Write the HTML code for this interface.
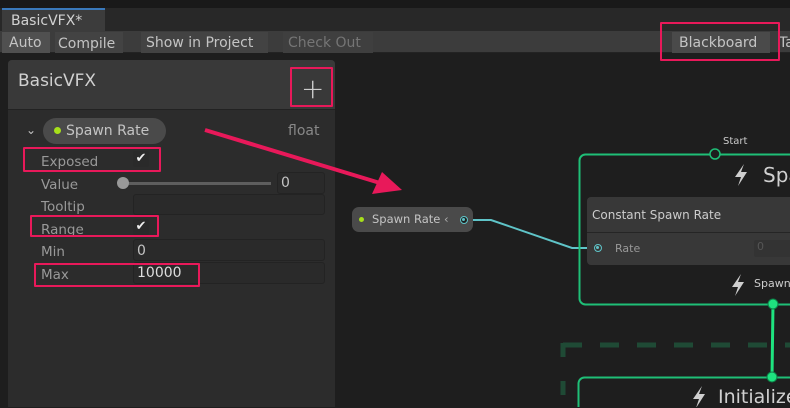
<!DOCTYPE html><html><head><style>
*{margin:0;padding:0;box-sizing:border-box}
body{width:790px;height:407px;overflow:hidden;background:#1e1e1e;font-family:"DejaVu Sans","Liberation Sans",sans-serif;position:relative;color:#c4c4c4}
.a{position:absolute}
.t{font-size:14px;white-space:nowrap}
.f{position:absolute;background:#2a2a2a;border:1px solid #232323;border-radius:3px}
.rb{position:absolute;border:2px solid #e8195a;border-radius:1px}
.cb{position:absolute;width:16px;height:16px;background:#2a2a2a;border-radius:2px;color:#eee;font-size:13px;text-align:center;line-height:16px}
.l{color:#999;font-size:13.5px}
</style></head><body>
<div class="a" style="left:0;top:0;width:790px;height:8px;background:#191919"></div>
<div class="a" style="left:0;top:8px;width:790px;height:23px;background:#282828"></div>
<div class="a" style="left:2px;top:8px;width:103px;height:23px;background:#3c3c3c;border-top:2px solid #3a79bb"></div>
<div class="a t" style="left:11px;top:13px;color:#d2d2d2">BasicVFX*</div>
<div class="a" style="left:0;top:31px;width:790px;height:22px;background:#3c3c3c;border-bottom:1px solid #232323"></div>
<div class="a" style="left:2px;top:32px;width:48px;height:21px;background:#505050"></div>
<div class="a t" style="left:9px;top:35px">Auto</div>
<div class="a" style="left:55px;top:32px;width:68px;height:21px;background:#434343"></div>
<div class="a t" style="left:58px;top:36px">Compile</div>
<div class="a" style="left:141px;top:32px;width:127px;height:21px;background:#434343"></div>
<div class="a t" style="left:146px;top:35px">Show in Project</div>
<div class="a" style="left:283px;top:32px;width:90px;height:21px;background:#3f3f3f"></div>
<div class="a t" style="left:288px;top:35px;color:#757575">Check Out</div>
<div class="a" style="left:672px;top:32px;width:98px;height:21px;background:#4a4a4a"></div>
<div class="a t" style="left:679px;top:35px">Blackboard</div>
<div class="a t" style="left:779px;top:35px">Ta</div>
<div class="rb" style="left:660px;top:22px;width:120px;height:39px"></div>
<div class="a" style="left:8px;top:60px;width:327px;height:347px;background:#2c2c2c;border-radius:4px 4px 0 0"></div>
<div class="a" style="left:8px;top:60px;width:327px;height:50px;background:#393939;border-radius:4px 4px 0 0;border-bottom:1px solid #222"></div>
<div class="a" style="left:18px;top:71px;font-size:17px;color:#d0d0d0">BasicVFX</div>
<div class="a" style="left:301px;top:72px;font-size:28px;color:#ccc;font-weight:300">+</div>
<div class="rb" style="left:290px;top:67px;width:43px;height:40px"></div>
<div class="a t" style="left:26px;top:123px;font-size:12px">⌄</div>
<div class="a" style="left:43px;top:118px;width:123px;height:26px;background:#4a4a4a;border-radius:13px"></div>
<div class="a" style="left:54px;top:127px;width:7px;height:7px;border-radius:50%;background:#a7e01a"></div>
<div class="a t" style="left:66px;top:123px">Spawn Rate</div>
<div class="a t" style="left:288px;top:123px;color:#888">float</div>
<div class="a t l" style="left:41px;top:154px">Exposed</div>
<div class="cb" style="left:133px;top:151px">✔</div>
<div class="rb" style="left:23px;top:147px;width:138px;height:25px"></div>
<div class="a t l" style="left:41px;top:177px">Value</div>
<div class="a" style="left:123px;top:182px;width:148px;height:3px;background:#5e5e5e"></div>
<div class="a" style="left:117px;top:177px;width:12px;height:12px;border-radius:50%;background:#999"></div>
<div class="f" style="left:277px;top:172px;width:48px;height:22px"></div>
<div class="a t" style="left:281px;top:175px">0</div>
<div class="a t l" style="left:41px;top:199px">Tooltip</div>
<div class="f" style="left:133px;top:194px;width:192px;height:21px"></div>
<div class="a t l" style="left:41px;top:222px">Range</div>
<div class="cb" style="left:133px;top:219px">✔</div>
<div class="rb" style="left:30px;top:215px;width:129px;height:22px"></div>
<div class="a t l" style="left:41px;top:244px">Min</div>
<div class="f" style="left:133px;top:239px;width:192px;height:22px"></div>
<div class="a t" style="left:137px;top:243px">0</div>
<div class="a t l" style="left:41px;top:267px">Max</div>
<div class="f" style="left:133px;top:262px;width:192px;height:22px"></div>
<div class="a t" style="left:137px;top:265px;color:#ddd">10000</div>
<div class="rb" style="left:34px;top:263px;width:166px;height:24px"></div>
<svg class="a" style="left:0;top:0" width="790" height="407">
<line x1="205" y1="130" x2="380" y2="183" stroke="#e8195a" stroke-width="4"/>
<polygon points="402,190 372,194 382,172" fill="#e8195a"/>
<polyline points="472,220 491,220 572,248 588,248" fill="none" stroke="#5fc4c8" stroke-width="2"/>
<rect x="579.5" y="154.5" width="220" height="150" rx="6" fill="none" stroke="#1fbf77" stroke-width="2"/>
<circle cx="715" cy="154" r="5" fill="#1e1e1e" stroke="#1fbf77" stroke-width="1.5"/>
<line x1="563" y1="345" x2="790" y2="345" stroke="#1f4a35" stroke-width="5" stroke-dasharray="19,18"/>
<line x1="563" y1="343" x2="563" y2="407" stroke="#1f4a35" stroke-width="5" stroke-dasharray="14,24"/>
<line x1="773" y1="304" x2="772" y2="377" stroke="#1ee37f" stroke-width="3"/>
<rect x="578.5" y="377.5" width="230" height="40" rx="6" fill="#1e1e1e" stroke="#1fbf77" stroke-width="2"/>
<circle cx="773" cy="304" r="5" fill="#1ee37f" stroke="#0d7a45"/>
<circle cx="772" cy="377" r="5" fill="#1ee37f" stroke="#0d7a45"/>
<path d="M744 164 L735 177 L741 177 L738 186 L747 172 L741 172 Z" fill="#cfcfcf"/>
<path d="M741 274 L732 287 L738 287 L735 296 L744 282 L738 282 Z" fill="#cfcfcf"/>
<path d="M702 386 L693 399 L699 399 L696 408 L705 394 L699 394 Z" fill="#cfcfcf"/>
</svg>
<div class="a" style="left:352px;top:207px;width:121px;height:25px;background:#4a4a4a;border-radius:7px"></div>
<div class="a" style="left:359px;top:217px;width:5px;height:5px;border-radius:50%;background:#a7e01a"></div>
<div class="a" style="left:372px;top:212px;font-size:11.5px;white-space:nowrap">Spawn Rate <span style="color:#aaa">‹</span></div>
<div class="a" style="left:460px;top:216px;width:8px;height:8px;border-radius:50%;border:1.5px solid #5fc4c8;background:#1e1e1e"><div style="margin:1px;width:3px;height:3px;background:#5fc4c8;border-radius:50%"></div></div>
<div class="a" style="left:723px;top:136px;font-size:10px;color:#ccc">Start</div>
<div class="a" style="left:763px;top:163px;font-size:20px;color:#d0d0d0">Spa</div>
<div class="a" style="left:587px;top:197px;width:210px;height:68px;background:#383838;border-radius:4px"></div>
<div class="a" style="left:587px;top:232px;width:210px;height:1px;background:#252525"></div>
<div class="a" style="left:592px;top:208px;font-size:12px;color:#ccc">Constant Spawn Rate</div>
<div class="a" style="left:594px;top:244px;width:8px;height:8px;border-radius:50%;border:1.5px solid #5fc4c8"><div style="margin:1px;width:3px;height:3px;background:#5fc4c8;border-radius:50%"></div></div>
<div class="a" style="left:615px;top:242px;font-size:11px;color:#999">Rate</div>
<div class="a" style="left:754px;top:240px;width:40px;height:17px;background:#333;border-radius:2px;font-size:11px;color:#555;padding-left:3px">0</div>
<div class="a" style="left:754px;top:277px;font-size:11px;color:#ccc">Spawn</div>
<div class="a" style="left:718px;top:386px;font-size:19px;color:#d0d0d0">Initialize</div>
</body></html>
